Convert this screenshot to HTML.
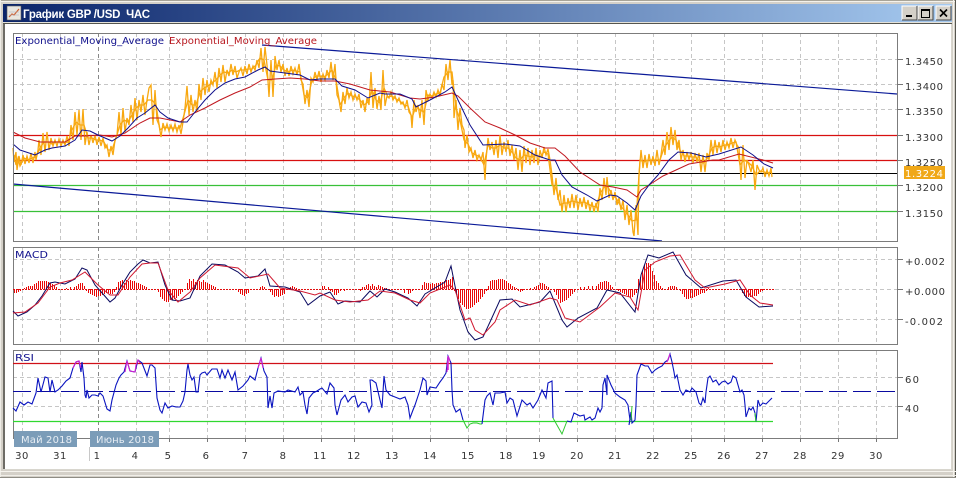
<!DOCTYPE html>
<html><head><meta charset="utf-8"><style>
html,body{margin:0;padding:0;background:#d4d0c8}
svg{display:block}
text{font-family:"DejaVu Sans","Liberation Sans",sans-serif;font-size:10px;fill:#333}
</style></head><body>
<svg width="956" height="478" viewBox="0 0 956 478" xmlns="http://www.w3.org/2000/svg" shape-rendering="auto">
<defs><linearGradient id="t" x1="0" x2="1" y1="0" y2="0"><stop offset="0" stop-color="#0a246a"/><stop offset="1" stop-color="#a6caf0"/></linearGradient></defs>
<rect width="956" height="478" fill="#d4d0c8"/>
<rect x="0" y="0" width="956" height="1" fill="#a8a498"/>
<rect x="0" y="1" width="956" height="1" fill="#f4f2ec"/>
<rect x="3" y="4" width="949" height="18" fill="url(#t)"/>
<rect x="3" y="22" width="949" height="1" fill="#e4e2da"/>
<rect x="3" y="23" width="949" height="1" fill="#55554e"/>
<rect x="0" y="0" width="1" height="478" fill="#eeece6"/>
<rect x="3" y="24" width="2" height="446" fill="#6e6c66"/>
<rect x="5" y="24" width="946" height="445" fill="#fff"/>
<rect x="951" y="24" width="1" height="446" fill="#d8d6ce"/>
<rect x="953" y="0" width="1" height="478" fill="#f4f2ec"/>
<rect x="955" y="0" width="1" height="478" fill="#55554e"/>
<rect x="3" y="469" width="949" height="1" fill="#d8d6ce"/>
<rect x="0" y="471" width="956" height="1" fill="#f6f4ee"/>
<rect x="0" y="475" width="956" height="1" fill="#f0eee8"/>
<rect x="0" y="477" width="956" height="1" fill="#8e8c84"/>

<!-- title icon -->
<rect x="7" y="6" width="14" height="14" fill="#e8e6e0" stroke="#5a5a5a" stroke-width=".6"/>
<path d="M9 17 L12 14 L14 15 L19 9" fill="none" stroke="#d06030" stroke-width="1.2"/>
<path d="M9 12 H19 M9 15 H19" stroke="#aab" stroke-width=".5"/>
<text x="23" y="18" style="font-family:'Liberation Sans',sans-serif;font-size:11.5px;font-weight:bold;fill:#fff" textLength="127" lengthAdjust="spacing">График GBP /USD&#160;&#160;ЧАС</text>

<!-- buttons -->
<g>
<rect x="902" y="6" width="15" height="14" fill="#d4d0c8"/><path d="M902 20V6H917" stroke="#fff" fill="none"/><path d="M917 6V20H902" stroke="#444" fill="none"/><rect x="906" y="15" width="6" height="2" fill="#000"/>
<rect x="918" y="6" width="15" height="14" fill="#d4d0c8"/><path d="M918 20V6H933" stroke="#fff" fill="none"/><path d="M933 6V20H918" stroke="#444" fill="none"/><rect x="921.5" y="9.5" width="8" height="8" fill="none" stroke="#000"/><rect x="921" y="9" width="9" height="2" fill="#000"/>
<rect x="936" y="6" width="15" height="14" fill="#d4d0c8"/><path d="M936 20V6H951" stroke="#fff" fill="none"/><path d="M951 6V20H936" stroke="#444" fill="none"/><path d="M940 9.5L947 16.5M947 9.5L940 16.5" stroke="#000" stroke-width="1.6"/>
</g>

<!-- grid -->
<g stroke="#c6c6c6" stroke-width="1" stroke-dasharray="4 3" fill="none">
<path d="M22.5 33V241M60.5 33V241M136.5 33V241M169.5 33V241M207.5 33V241M245.5 33V241M283.5 33V241M321.5 33V241M354.5 33V241M392.5 33V241M430.5 33V241M468.5 33V241M506.5 33V241M539.5 33V241M577.5 33V241M615.5 33V241M653.5 33V241M691.5 33V241M724.5 33V241M762.5 33V241M800.5 33V241M838.5 33V241M876.5 33V241"/>
<path d="M22.5 247V344M60.5 247V344M136.5 247V344M169.5 247V344M207.5 247V344M245.5 247V344M283.5 247V344M321.5 247V344M354.5 247V344M392.5 247V344M430.5 247V344M468.5 247V344M506.5 247V344M539.5 247V344M577.5 247V344M615.5 247V344M653.5 247V344M691.5 247V344M724.5 247V344M762.5 247V344M800.5 247V344M838.5 247V344M876.5 247V344"/>
<path d="M22.5 351V438M60.5 351V438M136.5 351V438M169.5 351V438M207.5 351V438M245.5 351V438M283.5 351V438M321.5 351V438M354.5 351V438M392.5 351V438M430.5 351V438M468.5 351V438M506.5 351V438M539.5 351V438M577.5 351V438M615.5 351V438M653.5 351V438M691.5 351V438M724.5 351V438M762.5 351V438M800.5 351V438M838.5 351V438M876.5 351V438"/>
<path d="M13 59.5H903M13 84.5H903M13 109.5H903"/>
<path d="M13 259.5H903M775 289.5H903M13 319.5H903"/>
<path d="M13 377.5H903M13 406.5H903"/>
</g>
<path d="M98.5 33V241M98.5 247V344M98.5 351V438" stroke="#888" stroke-dasharray="4 3" fill="none"/>

<!-- level lines -->
<path d="M13 135.5H897M13 160.5H897" stroke="#d81010" stroke-width="1.2"/>
<path d="M13 173.5H897" stroke="#000" stroke-width="1"/>
<path d="M13 185.5H897M13 211.5H897" stroke="#38c038" stroke-width="1.2"/>
<path d="M262 45L897 94" stroke="#0a1a98" stroke-width="1.2" fill="none"/>
<path d="M13 184L662 241" stroke="#0a1a98" stroke-width="1.2" fill="none"/>

<!-- price -->
<g fill="none" stroke="#f8a810" stroke-width="1.3">
<polyline id="pr" points="13,148 14,162 16,152 17,170 19,156 21,165 23,155 25,164 27,156 29,163 31,153 33,163 35,152 36,160 38,150 39,140 41,155 43,133 45,152 47,132 49,150 51,138 53,146 55,140 57,146 59,139 61,146 63,140 65,145 67,136 69,146 71,125 73,140 75,112 77,135 79,110 81,140 83,109 85,145 87,132 89,145 91,135 93,143 95,135 97,145 99,137 101,146 103,138 105,148 107,145 109,157 111,146 113,155 115,140 117,135 119,112 121,135 123,108 125,132 127,118 129,125 131,105 133,122 135,98 137,120 139,100 141,112 143,95 145,115 147,100 149,88 151,85 153,125 155,90 157,120 159,125 161,137 163,123 165,130 167,124 169,131 171,125 173,131 175,124 177,132 179,125 181,134 183,122 185,108 187,86 189,115 191,95 193,112 195,100 197,112 199,84 201,100 203,78 205,95 207,80 209,92 211,80 213,85 215,72 217,88 219,68 221,82 223,65 225,82 227,70 229,76 231,64 233,75 235,66 237,78 239,72 241,68 243,76 245,66 247,74 249,64 251,72 253,66 255,70 257,60 259,68 261,48 263,72 265,47 267,65 269,97 271,60 273,97 275,56 277,70 279,60 281,72 283,64 285,76 287,68 289,76 291,66 293,74 295,68 297,75 299,64 301,80 303,84 305,104 307,90 309,107 311,78 313,82 315,72 317,80 319,71 321,82 323,74 325,80 327,70 329,78 331,62 333,80 335,64 337,95 339,100 341,112 343,92 345,104 347,88 349,98 351,92 353,100 355,94 357,100 359,94 361,108 363,100 365,112 367,98 369,105 371,72 373,108 375,88 377,109 379,96 381,110 383,70 385,106 387,96 389,98 391,92 393,100 395,96 397,102 399,98 401,104 403,102 405,108 407,100 409,112 411,115 412,128 414,100 416,112 418,105 420,118 422,100 424,125 426,90 428,100 430,94 432,98 434,92 436,97 438,90 440,96 442,84 444,90 446,64 448,80 450,60 452,85 453,80 454,118 456,100 458,130 460,108 462,125 464,130 465,148 467,135 469,152 471,148 473,158 475,150 477,160 479,155 481,160 483,152 485,180 486,160 488,138 490,150 492,142 494,155 496,140 498,158 500,135 502,155 504,142 506,152 508,140 510,156 512,145 514,160 516,148 518,170 520,150 522,172 524,146 526,163 528,148 530,165 532,150 534,163 536,148 538,165 540,150 542,158 544,147 546,155 548,149 550,160 552,175 554,195 556,178 558,200 560,190 562,212 564,195 566,212 568,198 570,208 572,194 574,208 576,195 578,210 580,198 582,207 584,197 586,209 588,200 590,211 592,202 594,212 596,203 598,212 600,188 602,200 604,178 606,195 607,177 609,198 611,190 613,200 615,192 617,205 619,198 621,210 623,200 625,220 627,205 629,225 631,210 633,232 634,236 636,205 638,235 639,175 641,150 643,168 645,155 647,168 649,154 651,165 653,156 655,166 657,150 659,165 661,155 663,140 665,155 667,132 669,150 671,127 673,145 675,130 677,150 679,140 681,160 683,150 685,162 687,152 689,160 691,152 693,163 695,153 697,162 699,153 701,172 703,155 705,172 707,153 709,160 711,140 713,155 715,140 717,153 719,142 721,152 723,140 725,150 727,142 729,148 731,138 733,148 735,140 737,145 739,148 741,180 743,145 745,178 747,160 749,165 751,172 753,160 755,190 757,165 759,170 761,172 763,168 765,177 767,170 769,176 771,168 772,177"/>
<polyline points="14,155 16,165 18,158 20,166 24,158 28,160 32,158 36,157 40,148 44,142 48,142 52,144 56,142 60,142 64,143 68,142 72,130 76,122 80,125 84,125 88,138 92,138 96,140 100,140 104,142 108,150 112,150 116,138 120,125 124,120 128,122 132,115 136,108 140,105 144,105 148,100 152,100 156,105 160,130 164,127 168,128 172,128 176,128 180,128 184,115 188,100 192,105 196,105 200,92 204,88 208,86 212,83 216,80 220,75 224,72 228,73 232,70 236,72 240,70 244,70 248,69 252,69 256,65 260,58 264,60 268,80 272,80 276,65 280,66 284,70 288,72 292,70 296,71 300,72 304,95 308,98 312,80 316,76 320,76 324,77 328,74 332,70 336,80 340,105 344,98 348,93 352,96 356,97 360,100 364,105 368,102 372,90 376,100 380,103 384,88 388,97 392,96 396,99 400,101 404,105 408,106 412,118 416,106 420,110 424,112 428,95 432,96 436,94 440,93 444,77 448,72 452,72 456,108 460,120 464,140 468,144 472,153 476,155 480,157 484,165 488,145 492,148 496,148 500,145 504,148 508,148 512,152 516,158 520,160 524,155 528,156 532,157 536,155 540,157 544,152 548,154 552,185 556,188 560,205 564,203 568,203 572,201 576,202 580,203 584,202 588,204 592,206 596,207 600,194 604,187 608,187 612,195 616,198 620,205 624,210 628,215 632,221 636,220 640,160 644,162 648,160 652,160 656,160 660,160 664,148 668,142 672,137 676,140 680,150 684,156 688,156 692,157 696,157 700,162 704,163 708,157 712,148 716,146 720,147 724,145 728,145 732,143 736,142 740,165 744,160 748,162 752,166 756,175 760,171 764,172 768,173 772,172"/>
</g>
<!-- EMA -->
<polyline fill="none" stroke="#c01820" stroke-width="1" points="13,132 25,138 40,142 65,142 75,136 85,136 100,135 112,137 125,133 140,123 150,118 160,118 180,122 190,115 205,108 220,100 235,93 250,87 262,80 275,79 290,78 305,79 320,81 335,81 350,84 370,90 390,92 410,98 420,99 435,97 452,93 458,96 470,108 485,122 500,128 515,135 530,143 545,148 555,148 565,156 580,172 600,185 613,187 627,190 637,197 641,190 649,185 663,176 676,170 689,164 713,160 719,160 739,154 763,160 773,163"/>
<polyline fill="none" stroke="#10108c" stroke-width="1" points="13,144 20,150 35,155 45,150 52,148 65,146 75,140 82,130 90,131 98,135 112,141 120,136 128,128 137,118 145,113 155,105 160,112 168,118 180,122 187,122 195,112 205,100 215,90 225,83 235,79 245,77 258,70 265,67 270,71 285,73 300,75 310,80 320,79 335,79 342,86 355,90 368,98 380,93 385,94 400,94 412,99 416,107 430,100 445,92 452,87 458,100 470,125 483,145 505,144 520,146 535,155 550,160 555,160 562,175 572,187 587,195 597,201 610,195 617,196 627,203 635,210 641,196 649,185 658,175 669,160 678,152 691,153 706,157 719,154 741,147 753,155 764,164 773,168"/>

<!-- frames -->
<g fill="none" stroke="#7c7c7c" stroke-width="1">
<path d="M13.5 33.5H897.5V241.5H13.5Z"/>
<path d="M13.5 247.5H897.5V344.5H13.5Z"/>
<path d="M13.5 350.5H897.5V438.5H13.5Z"/>
</g>
<path d="M897 59.5h6M897 84.5h6M897 109.5h6M897 135.5h6M897 160.5h6M897 185.5h6M897 211.5h6M897 259.5h6M897 289.5h6M897 319.5h6M897 377.5h6M897 406.5h6" stroke="#777"/>
<path d="M22.5 438v4M60.5 438v4M98.5 438v4M136.5 438v4M169.5 438v4M207.5 438v4M245.5 438v4M283.5 438v4M321.5 438v4M354.5 438v4M392.5 438v4M430.5 438v4M468.5 438v4M506.5 438v4M539.5 438v4M577.5 438v4M615.5 438v4M653.5 438v4M691.5 438v4M724.5 438v4M762.5 438v4M800.5 438v4M838.5 438v4M876.5 438v4" stroke="#777"/>

<!-- MACD histogram -->
<path stroke="#e01010" stroke-width="1" fill="none" stroke-dasharray="2 1" d="M13 289.5H775"/>
<path transform="translate(.5 0)" stroke="#e80808" stroke-width="1" fill="none" d="M14 289v4M16 289v4M18 289v3M20 289v2M24 289v-1M26 289v-2M28 289v-3M30 289v-3M32 289v-3M34 289v-5M36 289v-6M38 289v-8M40 289v-8M42 289v-8M44 289v-8M46 289v-8M48 289v-7M50 289v-6M52 289v-5M54 289v-4M56 289v-2M66 289v-1M70 289v-2M74 289v-2M76 289v-3M78 289v-5M80 289v-6M82 289v-6M84 289v-3M86 289v2M88 289v4M90 289v5M92 289v6M94 289v7M96 289v8M98 289v7M100 289v7M102 289v6M104 289v5M106 289v4M108 289v4M110 289v5M112 289v5M114 289v3M116 289v-2M118 289v-7M120 289v-8M122 289v-9M124 289v-6M126 289v-9M128 289v-8M130 289v-9M132 289v-8M134 289v-8M136 289v-6M138 289v-6M140 289v-5M142 289v-4M144 289v-3M146 289v-2M158 289v3M160 289v8M162 289v10M164 289v12M166 289v13M168 289v13M170 289v11M172 289v11M174 289v10M176 289v9M178 289v7M180 289v5M182 289v3M187 289v-6M189 289v-10M191 289v-8M193 289v-10M195 289v-7M197 289v-9M199 289v-8M201 289v-7M203 289v-9M205 289v-7M207 289v-6M209 289v-5M211 289v-4M213 289v-3M215 289v-2M238 289v3M240 289v5M242 289v6M244 289v7M246 289v5M248 289v4M260 289v-2M262 289v-3M264 289v-2M270 289v3M272 289v6M274 289v8M276 289v7M278 289v8M280 289v7M282 289v6M284 289v5M288 289v-1M290 289v-2M292 289v-3M294 289v-2M296 289v-1M322 289v-3M324 289v-3M328 289v-2M330 289v2M332 289v3M334 289v6M336 289v6M338 289v4M340 289v2M344 289v2M346 289v1M360 289v2M362 289v-2M364 289v-2M366 289v-4M368 289v-5M370 289v-3M372 289v-5M374 289v-3M376 289v-2M378 289v-4M380 289v-3M382 289v-2M384 289v-1M386 289v-1M404 289v4M408 289v5M410 289v4M412 289v2M422 289v-4M424 289v-7M426 289v-6M428 289v-6M430 289v-5M432 289v-6M434 289v-5M436 289v-6M438 289v-6M440 289v-7M442 289v-7M444 289v-8M446 289v-9M448 289v-9M450 289v-10M452 289v-12M454 289v2M456 289v6M458 289v10M460 289v14M462 289v16M464 289v18M466 289v20M468 289v20M470 289v19M472 289v18M474 289v16M476 289v14M478 289v13M480 289v10M482 289v8M484 289v5M486 289v2M488 289v-3M490 289v-8M492 289v-9M494 289v-9M496 289v-9M498 289v-10M500 289v-10M502 289v-10M504 289v-9M506 289v-8M508 289v-6M510 289v-5M512 289v-3M514 289v-2M516 289v-1M518 289v2M520 289v3M522 289v2M526 289v1M530 289v-1M534 289v-2M536 289v-3M538 289v-4M540 289v-6M542 289v-6M544 289v-5M546 289v-3M548 289v-2M554 289v3M556 289v6M558 289v10M560 289v14M562 289v13M564 289v12M566 289v11M568 289v9M570 289v7M572 289v5M574 289v3M580 289v-2M584 289v-2M588 289v-3M592 289v-3M596 289v-3M598 289v-5M600 289v-7M602 289v-7M604 289v-8M606 289v-8M608 289v-7M610 289v-4M612 289v-2M616 289v1M618 289v2M620 289v3M622 289v4M624 289v5M626 289v6M628 289v8M630 289v9M632 289v8M634 289v6M636 289v4M638 289v-10M640 289v-12M642 289v-18M644 289v-24M646 289v-26M648 289v-26M650 289v-25M652 289v-18M654 289v-14M656 289v-8M658 289v-6M660 289v-3M662 289v-1M668 289v-2M670 289v-3M672 289v-3M674 289v-3M676 289v-2M680 289v2M682 289v5M684 289v8M686 289v10M688 289v10M690 289v9M692 289v9M694 289v8M696 289v7M698 289v6M700 289v5M702 289v4M704 289v4M706 289v2M708 289v-1M742 289v4M744 289v7M746 289v8M748 289v8M750 289v8M752 289v8M754 289v7M756 289v7M758 289v5M760 289v3M762 289v2M764 289v1"/>
<!-- MACD lines -->
<polyline fill="none" stroke="#0a0a60" stroke-width="1" points="13,311 18,316 27,312 35,305 42,296 50,283 55,282 65,284 75,279 82,268 87,270 95,285 103,294 110,302 115,298 122,285 130,272 138,264 143,260 150,263 158,262 165,285 172,300 180,301 190,298 200,276 212,264 225,265 238,272 245,278 258,276 265,269 270,286 285,287 300,292 308,305 320,296 330,292 338,304 345,301 360,302 370,291 377,297 385,289 395,292 408,298 417,306 425,294 435,288 445,282 451,266 455,286 460,310 463,318 468,332 475,340 483,337 490,322 500,300 512,299 520,307 540,302 550,291 562,320 567,327 578,318 597,308 607,290 620,293 635,312 641,275 648,255 659,258 673,252 686,275 701,288 723,281 736,280 746,297 759,307 773,306"/>
<polyline fill="none" stroke="#d01830" stroke-width="1" points="13,313 25,312 38,303 50,287 60,283 72,280 85,272 98,285 110,295 118,295 130,277 142,264 150,263 158,263 168,290 178,302 190,292 200,278 215,265 238,268 250,278 268,274 280,288 300,291 315,295 320,293 335,300 350,302 368,300 380,291 395,293 410,300 420,303 430,293 450,285 455,290 465,320 470,318 475,330 483,335 495,322 500,310 515,300 530,305 550,298 557,300 565,318 580,322 600,307 615,293 630,297 638,310 645,270 655,262 670,256 680,255 695,280 705,288 725,284 740,280 750,295 760,303 773,305"/>

<!-- RSI levels -->
<path d="M13 363.5H773" stroke="#d01018" stroke-width="1.2"/>
<path d="M13 421.5H773" stroke="#30d830" stroke-width="1.2"/>
<path d="M13 391.5H897" stroke="#0a0aa0" stroke-width="1" stroke-dasharray="18 6" fill="none"/>
<!-- RSI line -->
<polyline fill="none" stroke="#0a14c0" stroke-width="1.1" points="13,408 16,411 20,402 24,405 28,402 32,404 36,393 38,378 41,392 45,377 48,378 50,392 52,380 55,392 58,390 62,386 66,381 70,378 73,368 76,362 79,361 81,372 82,362 84,378 85,395 86,398 87,390 89,398 92,395 95,395 98,396 100,393 103,396 107,409 110,411 112,400 116,385 119,378 121,375 124,372 127,361 130,371 135,372 138,360 142,363 147,376 150,365 152,365 155,368 157,398 160,410 162,413 165,403 168,408 172,406 176,407 180,407 183,401 185,392 187,370 188,364 190,375 192,380 194,377 196,392 198,392 200,375 202,373 205,372 207,375 212,369 217,369 220,378 222,370 225,378 228,370 232,380 235,372 238,390 243,386 248,380 250,376 255,380 258,368 261,358 264,371 267,377 268,408 270,396 272,408 274,393 278,391 285,392 288,390 295,392 298,387 300,395 303,392 305,405 307,414 309,398 313,393 317,391 320,389 322,388 327,394 330,383 334,388 335,405 337,415 341,400 345,395 348,402 352,397 355,396 358,407 362,402 366,403 369,412 372,405 370,380 372,380 376,383 380,400 382,408 384,376 386,390 390,395 395,397 400,399 405,397 408,405 410,418 413,410 415,405 420,390 423,378 426,381 427,395 430,387 436,388 440,382 443,378 446,373 448,356 451,363 452,390 453,405 456,412 460,409 463,420"/>
<polyline fill="none" stroke="#30c830" stroke-width="1" points="463,420 467,428 470,424 473,423 477,423 480,424 482,424"/>
<polyline fill="none" stroke="#0a14c0" stroke-width="1.1" points="482,424 485,400 487,396 490,393 493,405 495,393 500,393 505,392 507,403 510,398 513,400 517,416 522,400 527,405 530,403 533,408 538,400 542,390 546,398 548,383 552,381 553,418"/>
<polyline fill="none" stroke="#30c830" stroke-width="1" points="553,418 562,434 567,421"/>
<polyline fill="none" stroke="#0a14c0" stroke-width="1.1" points="567,421 571,422 574,413 580,416 584,415 585,420 590,417 592,420 595,418 598,408 600,412 602,408 603,385 605,378 607,395 607,375 611,385 615,393 620,397 625,400 628,405 630,420 629,425 631,412 632,423 635,420 636,405 637,375 641,364 645,366 648,366 652,373 655,370 658,368 662,366 665,362 668,360 670,354 672,362 674,372 675,378 677,375 680,390 683,395 686,390 690,392 692,388 696,392 699,403 701,405 703,398 705,403 706,392 708,378 710,376 713,382 716,380 719,385 722,382 725,381 728,384 731,382 733,376 736,378 738,385 740,392 742,390 744,395 745,405 746,417 749,408 751,410 753,407 755,413 756,422 758,400 760,406 763,403 766,404 769,401 772,398"/>
<path d="M631 420L632 406M755 413L756 422" stroke="#30c830" fill="none"/>
<path d="M73 368L76 362 79 361 81 368M125 372L127 361 130 371 135 372 136 365 138 360 140 363M258 368L261 358 263 368M447 372L448 356 450 361M667 362L670 354" stroke="#d020d0" fill="none" stroke-width="1.1"/>
<path d="M448 370V358" stroke="#d020d0" stroke-width="1.5"/>

<!-- price tag -->
<rect x="904" y="166" width="41" height="13" fill="#f0a818"/>
<!-- labels -->
<text x="15" y="44" style="fill:#10108c" textLength="149" lengthAdjust="spacingAndGlyphs">Exponential_Moving_Average</text>
<text x="169" y="44" style="fill:#b81820" textLength="148" lengthAdjust="spacingAndGlyphs">Exponential_Moving_Average</text>
<text x="15" y="258" style="fill:#10108c" textLength="33" lengthAdjust="spacingAndGlyphs">MACD</text>
<text x="15" y="361" style="fill:#10108c" textLength="19" lengthAdjust="spacingAndGlyphs">RSI</text>
<g>
<text x="905" y="65" textLength="38">1.3450</text>
<text x="905" y="90" textLength="38">1.3400</text>
<text x="905" y="115" textLength="38">1.3350</text>
<text x="905" y="141" textLength="38">1.3300</text>
<text x="905" y="166" textLength="38">1.3250</text>
<text x="905" y="177" style="fill:#fff" textLength="38">1.3224</text>
<text x="905" y="191" textLength="38">1.3200</text>
<text x="905" y="217" textLength="38">1.3150</text>
<text x="905" y="265" textLength="40">+0.002</text>
<text x="905" y="295" textLength="40">+0.000</text>
<text x="905" y="325" textLength="38">-0.002</text>
<text x="905" y="383" textLength="14">60</text>
<text x="905" y="412" textLength="14">40</text>
</g>
<rect x="14" y="431" width="63" height="16" fill="#7b9cb8"/>
<rect x="90" y="431" width="69" height="16" fill="#7b9cb8"/>
<path d="M89.5 447V461" stroke="#c8c8c8"/>
<text x="21" y="443" style="fill:#e8eef4" textLength="51">Май 2018</text>
<text x="96" y="443" style="fill:#e8eef4" textLength="58">Июнь 2018</text>
<g text-anchor="middle" style="letter-spacing:.5px">
<text x="22" y="459">30</text><text x="60" y="459">31</text><text x="97" y="459">1</text><text x="135" y="459">4</text><text x="168" y="459">5</text><text x="206" y="459">6</text><text x="245" y="459">7</text><text x="283" y="459">8</text><text x="320" y="459">11</text><text x="354" y="459">12</text><text x="392" y="459">13</text><text x="430" y="459">14</text><text x="468" y="459">15</text><text x="506" y="459">18</text><text x="539" y="459">19</text><text x="577" y="459">20</text><text x="615" y="459">21</text><text x="653" y="459">22</text><text x="691" y="459">25</text><text x="724" y="459">26</text><text x="762" y="459">27</text><text x="800" y="459">28</text><text x="838" y="459">29</text><text x="876" y="459">30</text>
</g>
</svg>
</body></html>
